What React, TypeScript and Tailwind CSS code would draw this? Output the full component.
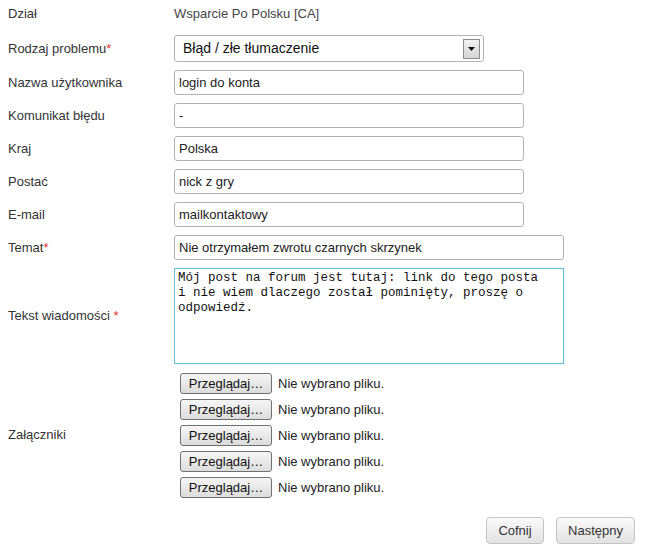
import React from "react";

const inputCls =
  "h-[25px] border border-[#b3b3b3] rounded-[3px] bg-white px-[4px] text-[13px] text-[#222] flex items-center";

function Label({ text, req }: { text: string; req?: boolean }) {
  return (
    <div className="pl-2 text-[13px] text-[#333]">
      {text}
      {req && <span className="text-[#d33]">*</span>}
    </div>
  );
}

function FileRow() {
  return (
    <div className="flex items-center h-[21px]">
      <div className="ml-[6px] w-[92px] h-[21px] border border-[#707070] rounded-[3px] bg-gradient-to-b from-[#f6f6f6] to-[#dcdcdc] text-[13px] text-[#111] flex items-center justify-center">
        Przeglądaj…
      </div>
      <span className="ml-[6px] text-[13px] text-[#222]">Nie wybrano pliku.</span>
    </div>
  );
}

export default function App() {
  return (
    <div className="w-[653px] h-[553px] bg-white font-['Liberation_Sans',Arial,sans-serif]">
      <div className="grid grid-cols-[174px_1fr] items-center gap-y-2">
        <div className="h-[27px] flex items-center">
          <Label text="Dział" />
        </div>
        <div className="text-[13px] text-[#444]">Wsparcie Po Polsku [CA]</div>

        <Label text="Rodzaj problemu" req />
        <div className="w-[310px] h-[27px] border border-[#b3b3b3] rounded-[3px] flex items-center justify-between pl-[8px] pr-[3px]">
          <span className="text-[14px] text-[#111]">Błąd / złe tłumaczenie</span>
          <div className="w-[17px] h-[20px] border border-[#8a8a8a] bg-gradient-to-b from-[#f2f2f2] to-[#d5d5d5] flex items-center justify-center">
            <svg width="7" height="4" viewBox="0 0 7 4">
              <path d="M0 0h7L3.5 4z" fill="#111" />
            </svg>
          </div>
        </div>

        <Label text="Nazwa użytkownika" />
        <div className={inputCls + " w-[350px]"}>login do konta</div>

        <Label text="Komunikat błędu" />
        <div className={inputCls + " w-[350px]"}>-</div>

        <Label text="Kraj" />
        <div className={inputCls + " w-[350px]"}>Polska</div>

        <Label text="Postać" />
        <div className={inputCls + " w-[350px]"}>nick z gry</div>

        <Label text="E-mail" />
        <div className={inputCls + " w-[350px]"}>mailkontaktowy</div>

        <Label text="Temat" req />
        <div className={inputCls + " w-[390px]"}>Nie otrzymałem zwrotu czarnych skrzynek</div>

        <div className="pl-2 text-[13px] text-[#333]">
          Tekst wiadomości <span className="text-[#d33]">*</span>
        </div>
        <div className="w-[390px] h-[96px] border border-[#66bedb] px-[3px] py-[2px] font-['Liberation_Mono','Courier_New',monospace] text-[12.5px] leading-[15px] text-[#111] whitespace-pre">
          {"Mój post na forum jest tutaj: link do tego posta\ni nie wiem dlaczego został pominięty, proszę o\nodpowiedź."}
        </div>

        <Label text="Załączniki" />
        <div className="flex flex-col gap-[5px] pt-[1px]">
          <FileRow />
          <FileRow />
          <FileRow />
          <FileRow />
          <FileRow />
        </div>
      </div>

      <div className="flex justify-end gap-[12px] pr-[18px] mt-[19px]">
        <div className="w-[58px] h-[27px] border border-[#c4c4c4] rounded-[4px] bg-gradient-to-b from-[#fafafa] to-[#e2e2e2] text-[13px] text-[#333] flex items-center justify-center">
          Cofnij
        </div>
        <div className="w-[79px] h-[27px] border border-[#c4c4c4] rounded-[4px] bg-gradient-to-b from-[#fafafa] to-[#e2e2e2] text-[13px] text-[#333] flex items-center justify-center">
          Następny
        </div>
      </div>
    </div>
  );
}
